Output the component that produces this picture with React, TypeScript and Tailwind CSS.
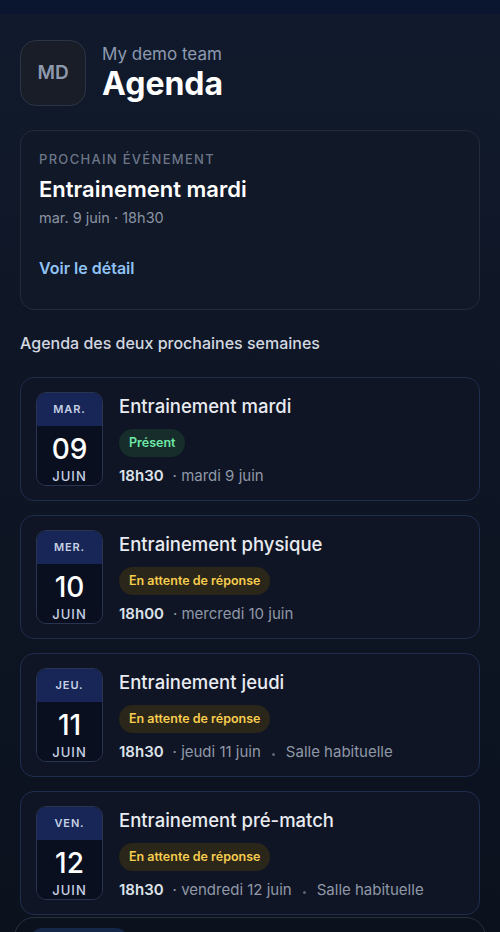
import React from "react";

type Ev = {
  dow: string;
  day: string;
  title: string;
  status: "present" | "pending";
  time: string;
  date: string;
  place?: string;
};

const events: Ev[] = [
  { dow: "MAR.", day: "09", title: "Entrainement mardi", status: "present", time: "18h30", date: "mardi 9 juin" },
  { dow: "MER.", day: "10", title: "Entrainement physique", status: "pending", time: "18h00", date: "mercredi 10 juin" },
  { dow: "JEU.", day: "11", title: "Entrainement jeudi", status: "pending", time: "18h30", date: "jeudi 11 juin", place: "Salle habituelle" },
  { dow: "VEN.", day: "12", title: "Entrainement pré-match", status: "pending", time: "18h30", date: "vendredi 12 juin", place: "Salle habituelle" },
];

function EventCard({ ev }: { ev: Ev }) {
  return (
    <div className="flex gap-4 rounded-[14px] border border-[#1f2d4f] bg-[#0f1524] px-[15px] pt-[14px] pb-[14px]">
      <div className="flex h-[94px] w-[67px] shrink-0 flex-col overflow-hidden rounded-[10px] border border-[#283450]">
        <div className="flex h-[33px] items-center justify-center bg-[#172557] text-[11px] font-semibold tracking-[0.08em] text-[#c7d2e4]">
          {ev.dow}
        </div>
        <div className="flex flex-1 flex-col items-center bg-[#0a0f1f]">
          <div className="mt-[6px] text-[28px] font-medium leading-[34px] text-white">{ev.day}</div>
          <div className="mt-[2px] text-[13px] font-medium leading-[16px] tracking-[0.08em] text-[#c7d2e4]">JUIN</div>
        </div>
      </div>
      <div className="flex min-w-0 flex-1 flex-col">
        <div className="mt-[2px] text-[18.5px] font-medium leading-[24px] text-[#e8ebf1]">{ev.title}</div>
        <div className="mt-[11px] flex">
          {ev.status === "present" ? (
            <span className="rounded-full bg-[#162d2b] px-[10px] py-[5px] text-[12.5px] font-semibold leading-[18px] text-[#6ee7a8]">
              Présent
            </span>
          ) : (
            <span className="rounded-full bg-[#2a2619] px-[10px] py-[5px] text-[12.5px] font-semibold leading-[18px] text-[#f7cd4f]">
              En attente de réponse
            </span>
          )}
        </div>
        <div className="mt-[9px] flex items-center text-[15px] leading-[20px]">
          <span className="font-semibold text-[#dde2ea]">{ev.time}</span>
          <span className="ml-[9px] text-[#8f98a8]">· {ev.date}</span>
          {ev.place && (
            <>
              <span className="mx-[11px] mt-[4px] h-[3px] w-[3px] rounded-full bg-[#5b6476]" />
              <span className="text-[#8f98a8]">{ev.place}</span>
            </>
          )}
        </div>
      </div>
    </div>
  );
}

export default function App() {
  return (
    <div
      className="relative h-[932px] w-full overflow-hidden bg-gradient-to-b from-[#111a2c] to-[#0b111d]"
      style={{ fontFamily: "Inter, 'Noto Sans', sans-serif" }}
    >
      <div className="h-[14px] bg-[#0a1630]" />
      <div className="px-5">
        <div className="mt-[26px] flex items-center gap-4">
          <div className="flex h-[66px] w-[66px] items-center justify-center rounded-[16px] border border-[#2c3545] bg-[#181d27] text-[19px] font-semibold text-[#8e99ad]">
            MD
          </div>
          <div className="flex flex-col">
            <div className="text-[17px] leading-[22px] text-[#8e9ab0]">My demo team</div>
            <div className="text-[32px] font-bold leading-[38px] text-white">Agenda</div>
          </div>
        </div>

        <div className="mt-[24px] h-[180px] rounded-[14px] border border-[#232c3b] bg-[#111827] px-[18px] pt-[20px]">
          <div className="text-[13px] font-medium uppercase leading-[16px] tracking-[0.1em] text-[#6c7689]">
            Prochain événement
          </div>
          <div className="mt-[8px] text-[22px] font-semibold leading-[28px] text-white">Entrainement mardi</div>
          <div className="mt-[5px] text-[14.5px] leading-[20px] text-[#8b94a4]">mar. 9 juin · 18h30</div>
          <div className="mt-[29px] text-[16px] font-semibold leading-[22px] text-[#90c2f5]">Voir le détail</div>
        </div>

        <div className="mt-[22px] text-[16px] font-medium leading-[22px] text-[#d3d8e0]">
          Agenda des deux prochaines semaines
        </div>

        <div className="mt-[23px] flex flex-col gap-[14px]">
          {events.map((ev) => (
            <EventCard key={ev.day} ev={ev} />
          ))}
        </div>
      </div>
      <div className="absolute left-[14px] right-[14px] top-[917px] h-[60px] rounded-[20px] border border-[#283141] bg-[#0c121d]">
        <div className="ml-[14px] mt-[10px] h-[40px] w-[100px] rounded-[14px] bg-[#15284a]" />
      </div>
    </div>
  );
}
